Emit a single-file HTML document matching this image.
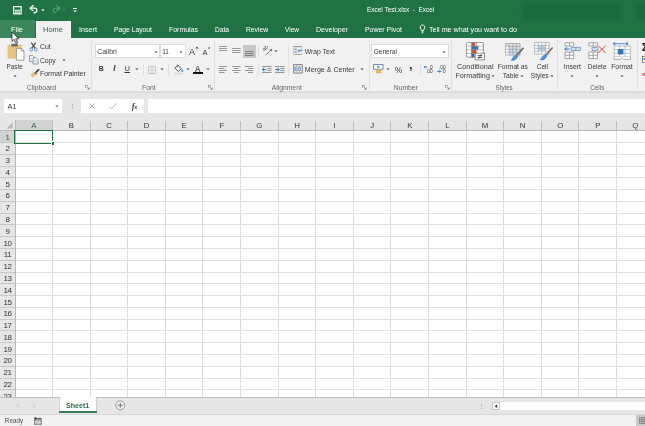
<!DOCTYPE html>
<html><head><meta charset="utf-8"><title>Excel Test.xlsx - Excel</title>
<style>
html,body{margin:0;padding:0}
body{width:645px;height:426px;overflow:hidden;position:relative;background:#fff;font-family:'Liberation Sans', sans-serif;}
#app{position:absolute;left:0;top:0;width:645px;height:426px;overflow:hidden;will-change:transform;opacity:0.999}
#app div,#app span,#app svg{position:absolute;display:block}
#app span{white-space:nowrap;line-height:10px;height:10px}
</style></head><body><div id="app">
<div style="left:0px;top:0px;width:645px;height:37.7px;background:#207245;"></div>
<div style="left:0px;top:20.2px;width:34.8px;height:17.5px;background:#3b865c;"></div>
<div style="left:36px;top:20.6px;width:35.2px;height:17.4px;background:#f1f1f1;"></div>
<div style="left:0px;top:37.7px;width:645px;height:54.3px;background:#f1f1f1;"></div>
<div style="left:0px;top:92px;width:645px;height:38px;background:#e6e6e6;"></div>
<div style="left:0px;top:91.4px;width:645px;height:1.3px;background:#dcdcdc;"></div>
<div style="left:0px;top:130px;width:15px;height:268px;background:#e6e6e6;"></div>
<div style="left:0px;top:398px;width:645px;height:16px;background:#e6e6e6;"></div>
<div style="left:0px;top:414px;width:645px;height:12px;background:#f1f1f1;"></div>
<div style="left:522px;top:3px;width:99px;height:17px;background:rgba(0,40,20,0.11);border-radius:4px;filter:blur(1.5px)"></div>
<div style="left:636px;top:3px;width:12px;height:17px;background:rgba(0,40,20,0.11);border-radius:4px;filter:blur(1.5px)"></div>
<span style="left:367.01px;top:4.80px;font-size:6.46px;color:#fff;">Excel Test.xlsx&nbsp; - &nbsp;Excel</span>
<span style="left:11.00px;top:24.70px;font-size:7.44px;color:#fff;">File</span>
<span style="left:43.01px;top:24.70px;font-size:7.49px;color:#27694a;">Home</span>
<span style="left:78.99px;top:24.70px;font-size:7.2px;color:#fff;">Insert</span>
<span style="left:114.01px;top:24.70px;font-size:6.76px;color:#fff;">Page Layout</span>
<span style="left:168.99px;top:24.70px;font-size:6.96px;color:#fff;">Formulas</span>
<span style="left:215.00px;top:24.70px;font-size:6.63px;color:#fff;">Data</span>
<span style="left:246.00px;top:24.70px;font-size:6.71px;color:#fff;">Review</span>
<span style="left:285.00px;top:24.70px;font-size:6.51px;color:#fff;">View</span>
<span style="left:316.00px;top:24.70px;font-size:7.02px;color:#fff;">Developer</span>
<span style="left:365.01px;top:24.70px;font-size:6.93px;color:#fff;">Power Pivot</span>
<span style="left:429.01px;top:24.70px;font-size:7.13px;color:#fff;">Tell me what you want to do</span>
<div style="left:91.4px;top:40px;width:1px;height:50px;background:#e0e0e0;"></div>
<div style="left:213.6px;top:40px;width:1px;height:50px;background:#e0e0e0;"></div>
<div style="left:368.6px;top:40px;width:1px;height:50px;background:#e0e0e0;"></div>
<div style="left:451px;top:40px;width:1px;height:50px;background:#e0e0e0;"></div>
<div style="left:557.4px;top:40px;width:1px;height:50px;background:#e0e0e0;"></div>
<div style="left:637px;top:40px;width:1px;height:50px;background:#e0e0e0;"></div>
<div style="left:143.2px;top:63.5px;width:1px;height:12px;background:#e0e0e0;"></div>
<div style="left:168px;top:63.5px;width:1px;height:12px;background:#e0e0e0;"></div>
<div style="left:258px;top:45.5px;width:1px;height:12px;background:#e0e0e0;"></div>
<div style="left:258px;top:63.5px;width:1px;height:12px;background:#e0e0e0;"></div>
<div style="left:288.3px;top:45.5px;width:1px;height:30px;background:#e0e0e0;"></div>
<div style="left:420px;top:63.5px;width:1px;height:12px;background:#e0e0e0;"></div>
<span style="left:26.81px;top:83.10px;font-size:6.84px;color:#666;">Clipboard</span>
<span style="left:142.00px;top:83.10px;font-size:6.84px;color:#666;">Font</span>
<span style="left:271.70px;top:83.10px;font-size:6.77px;color:#666;">Alignment</span>
<span style="left:393.79px;top:83.10px;font-size:6.75px;color:#666;">Number</span>
<span style="left:495.62px;top:83.10px;font-size:6.3px;color:#666;">Styles</span>
<span style="left:590.30px;top:83.10px;font-size:6.3px;color:#666;">Cells</span>
<span style="left:6.59px;top:62.30px;font-size:6.3px;color:#3a3a3a;">Paste</span>
<span style="left:39.90px;top:42.20px;font-size:7.0px;color:#3a3a3a;">Cut</span>
<span style="left:39.90px;top:56.00px;font-size:6.81px;color:#3a3a3a;">Copy</span>
<span style="left:39.90px;top:69.40px;font-size:6.94px;color:#3a3a3a;">Format Painter</span>
<div style="left:95.2px;top:44px;width:65px;height:14px;background:#fff;box-sizing:border-box;border:1px solid #dcdcdc"></div>
<div style="left:160.4px;top:44px;width:25.4px;height:14px;background:#fff;box-sizing:border-box;border:1px solid #dcdcdc"></div>
<span style="left:97.30px;top:47.10px;font-size:6.88px;color:#3a3a3a;">Calibri</span>
<span style="left:162.28px;top:47.10px;font-size:6.3px;color:#3a3a3a;">11</span>
<span style="left:98.70px;top:64.30px;font-size:6.91px;color:#3a3a3a;font-weight:bold;">B</span>
<span style="left:113.36px;top:64.30px;font-size:8.2px;color:#3a3a3a;font-weight:bold;font-style:italic;">I</span>
<span style="left:124.50px;top:64.30px;font-size:7.6px;color:#3a3a3a;text-decoration:underline">U</span>
<div style="left:243px;top:44.5px;width:12.5px;height:13.5px;background:#c8c8c8;"></div>
<span style="left:304.81px;top:47.30px;font-size:6.76px;color:#3a3a3a;">Wrap Text</span>
<span style="left:304.82px;top:65.20px;font-size:7.05px;color:#3a3a3a;">Merge &amp; Center</span>
<div style="left:371px;top:44px;width:77.8px;height:14px;background:#fff;box-sizing:border-box;border:1px solid #dcdcdc"></div>
<span style="left:373.70px;top:47.10px;font-size:6.52px;color:#3a3a3a;">General</span>
<span style="left:394.71px;top:65.20px;font-size:8.5px;color:#3a3a3a;">%</span>
<span style="left:408.89px;top:60.00px;font-size:13px;color:#3a3a3a;font-weight:bold;">,</span>
<span style="left:457.01px;top:62.20px;font-size:7.31px;color:#3a3a3a;">Conditional</span>
<span style="left:455.40px;top:71.40px;font-size:7.22px;color:#3a3a3a;">Formatting</span>
<span style="left:497.79px;top:62.20px;font-size:6.69px;color:#3a3a3a;">Format as</span>
<span style="left:502.80px;top:71.40px;font-size:6.65px;color:#3a3a3a;">Table</span>
<span style="left:536.80px;top:62.20px;font-size:6.5px;color:#3a3a3a;">Cell</span>
<span style="left:530.80px;top:71.40px;font-size:6.5px;color:#3a3a3a;">Styles</span>
<span style="left:563.79px;top:62.20px;font-size:6.84px;color:#3a3a3a;">Insert</span>
<span style="left:587.80px;top:62.20px;font-size:6.47px;color:#3a3a3a;">Delete</span>
<span style="left:611.20px;top:62.20px;font-size:6.82px;color:#3a3a3a;">Format</span>
<div style="left:3.5px;top:99px;width:58.5px;height:14px;background:#fff;"></div>
<div style="left:80.5px;top:99px;width:63.5px;height:14px;background:#fff;"></div>
<div style="left:147.5px;top:99px;width:500px;height:14px;background:#fff;"></div>
<span style="left:7.50px;top:102.00px;font-size:7.36px;color:#3a3a3a;">A1</span>
<div style="left:14.5px;top:120px;width:38.2px;height:10.4px;background:#d2d2d2;"></div>
<div style="left:0px;top:130.4px;width:15px;height:12.1px;background:#d2d2d2;"></div>
<span style="left:31.20px;top:121.00px;font-size:7.8px;color:#365c4a;">A</span>
<div style="left:52px;top:130px;width:1px;height:268px;background:#dcdcdc;"></div>
<div style="left:52px;top:121px;width:1px;height:9.5px;background:#bebebe;"></div>
<span style="left:68.80px;top:121.00px;font-size:7.8px;color:#333;">B</span>
<div style="left:90px;top:130px;width:1px;height:268px;background:#dcdcdc;"></div>
<div style="left:90px;top:121px;width:1px;height:9.5px;background:#bebebe;"></div>
<span style="left:106.18px;top:121.00px;font-size:7.8px;color:#333;">C</span>
<div style="left:127px;top:130px;width:1px;height:268px;background:#dcdcdc;"></div>
<div style="left:127px;top:121px;width:1px;height:9.5px;background:#bebebe;"></div>
<span style="left:143.78px;top:121.00px;font-size:7.8px;color:#333;">D</span>
<div style="left:165px;top:130px;width:1px;height:268px;background:#dcdcdc;"></div>
<div style="left:165px;top:121px;width:1px;height:9.5px;background:#bebebe;"></div>
<span style="left:181.60px;top:121.00px;font-size:7.8px;color:#333;">E</span>
<div style="left:202px;top:130px;width:1px;height:268px;background:#dcdcdc;"></div>
<div style="left:202px;top:121px;width:1px;height:9.5px;background:#bebebe;"></div>
<span style="left:219.42px;top:121.00px;font-size:7.8px;color:#333;">F</span>
<div style="left:240px;top:130px;width:1px;height:268px;background:#dcdcdc;"></div>
<div style="left:240px;top:121px;width:1px;height:9.5px;background:#bebebe;"></div>
<span style="left:256.37px;top:121.00px;font-size:7.8px;color:#333;">G</span>
<div style="left:278px;top:130px;width:1px;height:268px;background:#dcdcdc;"></div>
<div style="left:278px;top:121px;width:1px;height:9.5px;background:#bebebe;"></div>
<span style="left:294.18px;top:121.00px;font-size:7.8px;color:#333;">H</span>
<div style="left:315px;top:130px;width:1px;height:268px;background:#dcdcdc;"></div>
<div style="left:315px;top:121px;width:1px;height:9.5px;background:#bebebe;"></div>
<span style="left:333.52px;top:121.00px;font-size:7.8px;color:#333;">I</span>
<div style="left:353px;top:130px;width:1px;height:268px;background:#dcdcdc;"></div>
<div style="left:353px;top:121px;width:1px;height:9.5px;background:#bebebe;"></div>
<span style="left:370.25px;top:121.00px;font-size:7.8px;color:#333;">J</span>
<div style="left:390px;top:130px;width:1px;height:268px;background:#dcdcdc;"></div>
<div style="left:390px;top:121px;width:1px;height:9.5px;background:#bebebe;"></div>
<span style="left:407.20px;top:121.00px;font-size:7.8px;color:#333;">K</span>
<div style="left:428px;top:130px;width:1px;height:268px;background:#dcdcdc;"></div>
<div style="left:428px;top:121px;width:1px;height:9.5px;background:#bebebe;"></div>
<span style="left:445.23px;top:121.00px;font-size:7.8px;color:#333;">L</span>
<div style="left:466px;top:130px;width:1px;height:268px;background:#dcdcdc;"></div>
<div style="left:466px;top:121px;width:1px;height:9.5px;background:#bebebe;"></div>
<span style="left:481.75px;top:121.00px;font-size:7.8px;color:#333;">M</span>
<div style="left:503px;top:130px;width:1px;height:268px;background:#dcdcdc;"></div>
<div style="left:503px;top:121px;width:1px;height:9.5px;background:#bebebe;"></div>
<span style="left:519.78px;top:121.00px;font-size:7.8px;color:#333;">N</span>
<div style="left:541px;top:130px;width:1px;height:268px;background:#dcdcdc;"></div>
<div style="left:541px;top:121px;width:1px;height:9.5px;background:#bebebe;"></div>
<span style="left:557.17px;top:121.00px;font-size:7.8px;color:#333;">O</span>
<div style="left:578px;top:130px;width:1px;height:268px;background:#dcdcdc;"></div>
<div style="left:578px;top:121px;width:1px;height:9.5px;background:#bebebe;"></div>
<span style="left:595.20px;top:121.00px;font-size:7.8px;color:#333;">P</span>
<div style="left:616px;top:130px;width:1px;height:268px;background:#dcdcdc;"></div>
<div style="left:616px;top:121px;width:1px;height:9.5px;background:#bebebe;"></div>
<span style="left:632.37px;top:121.00px;font-size:7.8px;color:#333;">Q</span>
<div style="left:654px;top:130px;width:1px;height:268px;background:#dcdcdc;"></div>
<div style="left:654px;top:121px;width:1px;height:9.5px;background:#bebebe;"></div>
<span style="left:5.47px;top:132.59px;font-size:8px;color:#365c4a;">1</span>
<div style="left:15px;top:142px;width:631px;height:1px;background:#dfdfdf;"></div>
<div style="left:0px;top:142px;width:15px;height:1px;background:#c8c8c8;"></div>
<span style="left:5.47px;top:144.37px;font-size:8px;color:#333;">2</span>
<div style="left:15px;top:154px;width:631px;height:1px;background:#dfdfdf;"></div>
<div style="left:0px;top:154px;width:15px;height:1px;background:#c8c8c8;"></div>
<span style="left:5.47px;top:156.15px;font-size:8px;color:#333;">3</span>
<div style="left:15px;top:166px;width:631px;height:1px;background:#dfdfdf;"></div>
<div style="left:0px;top:166px;width:15px;height:1px;background:#c8c8c8;"></div>
<span style="left:5.47px;top:167.93px;font-size:8px;color:#333;">4</span>
<div style="left:15px;top:177px;width:631px;height:1px;background:#dfdfdf;"></div>
<div style="left:0px;top:177px;width:15px;height:1px;background:#c8c8c8;"></div>
<span style="left:5.47px;top:179.71px;font-size:8px;color:#333;">5</span>
<div style="left:15px;top:189px;width:631px;height:1px;background:#dfdfdf;"></div>
<div style="left:0px;top:189px;width:15px;height:1px;background:#c8c8c8;"></div>
<span style="left:5.47px;top:191.49px;font-size:8px;color:#333;">6</span>
<div style="left:15px;top:201px;width:631px;height:1px;background:#dfdfdf;"></div>
<div style="left:0px;top:201px;width:15px;height:1px;background:#c8c8c8;"></div>
<span style="left:5.47px;top:203.27px;font-size:8px;color:#333;">7</span>
<div style="left:15px;top:213px;width:631px;height:1px;background:#dfdfdf;"></div>
<div style="left:0px;top:213px;width:15px;height:1px;background:#c8c8c8;"></div>
<span style="left:5.47px;top:215.05px;font-size:8px;color:#333;">8</span>
<div style="left:15px;top:224px;width:631px;height:1px;background:#dfdfdf;"></div>
<div style="left:0px;top:224px;width:15px;height:1px;background:#c8c8c8;"></div>
<span style="left:5.47px;top:226.83px;font-size:8px;color:#333;">9</span>
<div style="left:15px;top:236px;width:631px;height:1px;background:#dfdfdf;"></div>
<div style="left:0px;top:236px;width:15px;height:1px;background:#c8c8c8;"></div>
<span style="left:3.50px;top:238.61px;font-size:8px;color:#333;letter-spacing:-0.5px;">10</span>
<div style="left:15px;top:248px;width:631px;height:1px;background:#dfdfdf;"></div>
<div style="left:0px;top:248px;width:15px;height:1px;background:#c8c8c8;"></div>
<span style="left:3.79px;top:250.39px;font-size:8px;color:#333;letter-spacing:-0.5px;">11</span>
<div style="left:15px;top:260px;width:631px;height:1px;background:#dfdfdf;"></div>
<div style="left:0px;top:260px;width:15px;height:1px;background:#c8c8c8;"></div>
<span style="left:3.50px;top:262.17px;font-size:8px;color:#333;letter-spacing:-0.5px;">12</span>
<div style="left:15px;top:272px;width:631px;height:1px;background:#dfdfdf;"></div>
<div style="left:0px;top:272px;width:15px;height:1px;background:#c8c8c8;"></div>
<span style="left:3.50px;top:273.95px;font-size:8px;color:#333;letter-spacing:-0.5px;">13</span>
<div style="left:15px;top:283px;width:631px;height:1px;background:#dfdfdf;"></div>
<div style="left:0px;top:283px;width:15px;height:1px;background:#c8c8c8;"></div>
<span style="left:3.50px;top:285.73px;font-size:8px;color:#333;letter-spacing:-0.5px;">14</span>
<div style="left:15px;top:295px;width:631px;height:1px;background:#dfdfdf;"></div>
<div style="left:0px;top:295px;width:15px;height:1px;background:#c8c8c8;"></div>
<span style="left:3.50px;top:297.51px;font-size:8px;color:#333;letter-spacing:-0.5px;">15</span>
<div style="left:15px;top:307px;width:631px;height:1px;background:#dfdfdf;"></div>
<div style="left:0px;top:307px;width:15px;height:1px;background:#c8c8c8;"></div>
<span style="left:3.50px;top:309.29px;font-size:8px;color:#333;letter-spacing:-0.5px;">16</span>
<div style="left:15px;top:319px;width:631px;height:1px;background:#dfdfdf;"></div>
<div style="left:0px;top:319px;width:15px;height:1px;background:#c8c8c8;"></div>
<span style="left:3.50px;top:321.07px;font-size:8px;color:#333;letter-spacing:-0.5px;">17</span>
<div style="left:15px;top:330px;width:631px;height:1px;background:#dfdfdf;"></div>
<div style="left:0px;top:330px;width:15px;height:1px;background:#c8c8c8;"></div>
<span style="left:3.50px;top:332.85px;font-size:8px;color:#333;letter-spacing:-0.5px;">18</span>
<div style="left:15px;top:342px;width:631px;height:1px;background:#dfdfdf;"></div>
<div style="left:0px;top:342px;width:15px;height:1px;background:#c8c8c8;"></div>
<span style="left:3.50px;top:344.63px;font-size:8px;color:#333;letter-spacing:-0.5px;">19</span>
<div style="left:15px;top:354px;width:631px;height:1px;background:#dfdfdf;"></div>
<div style="left:0px;top:354px;width:15px;height:1px;background:#c8c8c8;"></div>
<span style="left:3.50px;top:356.41px;font-size:8px;color:#333;letter-spacing:-0.5px;">20</span>
<div style="left:15px;top:366px;width:631px;height:1px;background:#dfdfdf;"></div>
<div style="left:0px;top:366px;width:15px;height:1px;background:#c8c8c8;"></div>
<span style="left:3.50px;top:368.19px;font-size:8px;color:#333;letter-spacing:-0.5px;">21</span>
<div style="left:15px;top:378px;width:631px;height:1px;background:#dfdfdf;"></div>
<div style="left:0px;top:378px;width:15px;height:1px;background:#c8c8c8;"></div>
<span style="left:3.50px;top:379.97px;font-size:8px;color:#333;letter-spacing:-0.5px;">22</span>
<div style="left:15px;top:389px;width:631px;height:1px;background:#dfdfdf;"></div>
<div style="left:0px;top:389px;width:15px;height:1px;background:#c8c8c8;"></div>
<span style="left:3.50px;top:391.75px;font-size:8px;color:#333;letter-spacing:-0.5px;">23</span>
<div style="left:15px;top:401px;width:631px;height:1px;background:#dfdfdf;"></div>
<div style="left:0px;top:401px;width:15px;height:1px;background:#c8c8c8;"></div>
<div style="left:0px;top:130px;width:645px;height:1px;background:#b9b9b9;"></div>
<div style="left:14.5px;top:120px;width:1px;height:278px;background:#b9b9b9;"></div>
<div style="left:14.3px;top:129.9px;width:39.0px;height:13.7px;background:transparent;box-sizing:border-box;border:1.2px solid #207245"></div>
<div style="left:51.8px;top:142px;width:2.6px;height:2.6px;background:#207245;outline:0.5px solid #fff"></div>
<div style="left:0px;top:397.7px;width:645px;height:16.5px;background:#e6e6e6;"></div>
<div style="left:0px;top:397.3px;width:645px;height:0.9px;background:#bdbdbd;"></div>
<div style="left:0px;top:414.5px;width:645px;height:12px;background:#f1f1f1;"></div>
<div style="left:0px;top:413.6px;width:645px;height:1px;background:#d6d6d6;"></div>
<div style="left:58.6px;top:397px;width:38.2px;height:14.5px;background:#fff;box-sizing:border-box;border-left:0.8px solid #cfcfcf;border-right:0.8px solid #cfcfcf"></div>
<div style="left:58.6px;top:410.8px;width:38.2px;height:1.8px;background:#3b7a59;"></div>
<span style="left:66.01px;top:400.50px;font-size:7.07px;color:#2c6b4a;font-weight:bold;">Sheet1</span>
<span style="left:4.84px;top:415.60px;font-size:6.3px;color:#4a4a4a;">Ready</span>
<svg style="left:12.6px;top:5.6px" width="9" height="9" viewBox="0 0 9 9"><path d="M0.6 0.6 H8.2 V7.9 H0.6 Z M0.6 4.3 H8.2 M2.6 7.9 V6 H6.2 V7.9" fill="none" stroke="#fff" stroke-width="1.1"/></svg>
<svg style="left:29px;top:5px" width="10" height="9" viewBox="0 0 10 9"><path d="M1 3.2 L4.2 0.6 M1 3.2 L4.2 5.8 M1 3.2 H5.8 C8.6 3.2 8.8 7.2 5.2 8" fill="none" stroke="#fff" stroke-width="1.3" stroke-linecap="round"/></svg>
<svg style="left:40.4px;top:6.7px" width="6" height="6" viewBox="0 0 6 6"><path d="M1.2 2.415 L4.8 2.415 L3 4.17 Z" fill="#fff"/></svg>
<svg style="left:50.5px;top:5px" width="10" height="9" viewBox="0 0 10 9"><path d="M9 3.2 L5.8 0.6 M9 3.2 L5.8 5.8 M9 3.2 H4.2 C1.4 3.2 1.2 7.2 4.8 8" fill="none" stroke="#5c9b7a" stroke-width="1.1" stroke-linecap="round"/></svg>
<svg style="left:60.8px;top:6.7px" width="6" height="6" viewBox="0 0 6 6"><path d="M1.4 2.48 L4.6 2.48 L3 4.04 Z" fill="#5c9b7a"/></svg>
<div style="left:73.2px;top:7.6px;width:3.6px;height:0.9px;background:#fff;"></div>
<svg style="left:72px;top:7.6px" width="6" height="6" viewBox="0 0 6 6"><path d="M1.2 2.415 L4.8 2.415 L3 4.17 Z" fill="#fff"/></svg>
<svg style="left:418.8px;top:23.9px" width="7" height="10" viewBox="0 0 7 10"><path d="M3.5 1 C1.6 1 0.9 2.6 1.3 3.9 C1.7 5 2.4 5.3 2.4 6.6 H4.6 C4.6 5.3 5.3 5 5.7 3.9 C6.1 2.6 5.4 1 3.5 1 Z M2.5 7.8 H4.5 M2.8 8.9 H4.2" fill="none" stroke="#fff" stroke-width="0.9"/></svg>
<svg style="left:7px;top:43px" width="18" height="18" viewBox="0 0 18 18"><rect x="0.6" y="1.8" width="14" height="13.8" fill="#e9c27c"/><rect x="4.4" y="0.8" width="6.4" height="2.6" fill="#666"/><path d="M9.4 5.4 H14.4 L17 8 V17.2 H9.4 Z" fill="#fff" stroke="#8a8a8a" stroke-width="0.8"/><path d="M14.4 5.4 V8 H17" fill="none" stroke="#8a8a8a" stroke-width="0.7"/></svg>
<svg style="left:11.5px;top:73px" width="6" height="6" viewBox="0 0 6 6"><path d="M1.4 2.48 L4.6 2.48 L3 4.04 Z" fill="#3a3a3a"/></svg>
<svg style="left:29px;top:41.5px" width="9" height="10" viewBox="0 0 9 10"><path d="M2.3 0.6 L6.3 6.4 M6.7 0.6 L2.7 6.4" stroke="#4a4a4a" stroke-width="1.2" fill="none"/><ellipse cx="2.2" cy="7.5" rx="1.4" ry="1.7" fill="none" stroke="#5a90cc" stroke-width="0.9"/><ellipse cx="6.8" cy="7.5" rx="1.4" ry="1.7" fill="none" stroke="#5a90cc" stroke-width="0.9"/></svg>
<svg style="left:28.5px;top:55px" width="10" height="10" viewBox="0 0 10 10"><path d="M0.6 0.6 H3.6 L5.2 2.2 V6.6 H0.6 Z" fill="#fff" stroke="#808080" stroke-width="0.8"/><path d="M4 2.8 H7.2 L9 4.6 V9 H4 Z" fill="#fff" stroke="#808080" stroke-width="0.8"/><path d="M5 5.6 H8 M5 7.2 H8 M1.6 3.2 H3.2 M1.6 4.8 H3.2" stroke="#7fb2e0" stroke-width="0.6"/></svg>
<svg style="left:60.7px;top:57.3px" width="6" height="6" viewBox="0 0 6 6"><path d="M1.4 2.48 L4.6 2.48 L3 4.04 Z" fill="#3a3a3a"/></svg>
<svg style="left:29.5px;top:69px" width="10" height="10" viewBox="0 0 10 10"><path d="M8.6 0.6 L5.2 4.2" stroke="#444" stroke-width="1.8" stroke-linecap="round"/><path d="M5.6 3 L6.8 4.4 L4.6 7.6 L2 8.4 L0.8 6.6 L1.6 4.2 Z" fill="#eac27a"/><path d="M4.6 3.4 L6.6 5.4" stroke="#555" stroke-width="1.2"/></svg>
<svg style="left:85.2px;top:85.2px" width="5" height="5" viewBox="0 0 5 5"><path d="M0.4 3 V0.4 H3" fill="none" stroke="#777" stroke-width="0.7"/><path d="M1.6 1.6 L4 4 M4.2 2.2 V4.2 H2.2" fill="none" stroke="#777" stroke-width="0.7"/></svg>
<svg style="left:207.5px;top:85.2px" width="5" height="5" viewBox="0 0 5 5"><path d="M0.4 3 V0.4 H3" fill="none" stroke="#777" stroke-width="0.7"/><path d="M1.6 1.6 L4 4 M4.2 2.2 V4.2 H2.2" fill="none" stroke="#777" stroke-width="0.7"/></svg>
<svg style="left:362px;top:85.2px" width="5" height="5" viewBox="0 0 5 5"><path d="M0.4 3 V0.4 H3" fill="none" stroke="#777" stroke-width="0.7"/><path d="M1.6 1.6 L4 4 M4.2 2.2 V4.2 H2.2" fill="none" stroke="#777" stroke-width="0.7"/></svg>
<svg style="left:444.5px;top:85.2px" width="5" height="5" viewBox="0 0 5 5"><path d="M0.4 3 V0.4 H3" fill="none" stroke="#777" stroke-width="0.7"/><path d="M1.6 1.6 L4 4 M4.2 2.2 V4.2 H2.2" fill="none" stroke="#777" stroke-width="0.7"/></svg>
<svg style="left:10.5px;top:30.5px" width="10" height="14" viewBox="0 0 10 14"><path d="M1 0.8 L1 10.4 L3.2 8.4 L4.9 12.2 L6.5 11.5 L4.8 7.8 L7.8 7.8 Z" fill="#fff" stroke="#222" stroke-width="0.8" stroke-linejoin="round"/></svg>
<svg style="left:152.8px;top:48.8px" width="6" height="6" viewBox="0 0 6 6"><path d="M1.4 2.48 L4.6 2.48 L3 4.04 Z" fill="#3a3a3a"/></svg>
<svg style="left:178.3px;top:48.8px" width="6" height="6" viewBox="0 0 6 6"><path d="M1.4 2.48 L4.6 2.48 L3 4.04 Z" fill="#3a3a3a"/></svg>
<svg style="left:134.2px;top:66.2px" width="6" height="6" viewBox="0 0 6 6"><path d="M1.4 2.48 L4.6 2.48 L3 4.04 Z" fill="#3a3a3a"/></svg>
<span style="left:189.00px;top:47.00px;font-size:9px;color:#3a3a3a;">A</span>
<svg style="left:195px;top:46px" width="4" height="3" viewBox="0 0 4 3"><path d="M0.3 2.4 L2 0.4 L3.7 2.4 Z" fill="#555"/></svg>
<span style="left:202.60px;top:47.70px;font-size:7.5px;color:#3a3a3a;">A</span>
<svg style="left:206.6px;top:46.6px" width="4" height="3" viewBox="0 0 4 3"><path d="M0.5 0.5 L2 2.2 L3.5 0.5 Z" fill="#555"/></svg>
<svg style="left:148.3px;top:65.5px" width="8" height="8" viewBox="0 0 8 8"><path d="M0.5 0.5 H7.5 V7.5 H0.5 Z M4 0.5 V7.5 M0.5 4 H7.5" fill="none" stroke="#c4c4c4" stroke-width="0.9"/></svg>
<svg style="left:159.4px;top:66.2px" width="6" height="6" viewBox="0 0 6 6"><path d="M1.4 2.48 L4.6 2.48 L3 4.04 Z" fill="#3a3a3a"/></svg>
<svg style="left:173.5px;top:64px" width="10" height="11" viewBox="0 0 10 11"><path d="M3.6 1.2 L7.4 4.6 L4.2 7.4 L1 4.2 Z" fill="#fff" stroke="#555" stroke-width="1" stroke-linejoin="round"/><path d="M3.8 0.4 V3.4" stroke="#666" stroke-width="0.7"/><path d="M8.3 5 C8.3 5 9.3 6.4 9.3 7 A1 1 0 0 1 7.3 7 C7.3 6.4 8.3 5 8.3 5 Z" fill="#5b8fcf"/><rect x="0.4" y="8.7" width="8.6" height="1.7" fill="#d9d9d9"/></svg>
<svg style="left:184.7px;top:66.2px" width="6" height="6" viewBox="0 0 6 6"><path d="M1.4 2.48 L4.6 2.48 L3 4.04 Z" fill="#3a3a3a"/></svg>
<span style="left:194.83px;top:64.60px;font-size:8.2px;color:#666;font-weight:bold;">A</span>
<div style="left:193px;top:72.2px;width:10px;height:2px;background:#111;"></div>
<svg style="left:204.7px;top:66.2px" width="6" height="6" viewBox="0 0 6 6"><path d="M1.4 2.48 L4.6 2.48 L3 4.04 Z" fill="#3a3a3a"/></svg>
<svg style="left:218.8px;top:46px" width="8.6" height="6" viewBox="0 0 8.6 6"><rect x="0" y="0" width="8.6" height="0.9" fill="#8f8f8f"/><rect x="0" y="2" width="8.6" height="0.9" fill="#8f8f8f"/><rect x="0" y="4" width="8.6" height="0.9" fill="#8f8f8f"/></svg>
<svg style="left:232px;top:48px" width="8.6" height="6" viewBox="0 0 8.6 6"><rect x="0" y="0" width="8.6" height="0.9" fill="#8f8f8f"/><rect x="0" y="2" width="8.6" height="0.9" fill="#8f8f8f"/><rect x="0" y="4" width="8.6" height="0.9" fill="#8f8f8f"/></svg>
<svg style="left:245px;top:51.2px" width="8.6" height="6" viewBox="0 0 8.6 6"><rect x="0" y="0" width="8.6" height="0.9" fill="#777"/><rect x="0" y="2" width="8.6" height="0.9" fill="#777"/><rect x="0" y="4" width="8.6" height="0.9" fill="#777"/></svg>
<svg style="left:218.8px;top:66.3px" width="8.6" height="8" viewBox="0 0 8.6 8"><rect x="0" y="0" width="8.6" height="0.9" fill="#8f8f8f"/><rect x="0" y="2" width="5.6" height="0.9" fill="#8f8f8f"/><rect x="0" y="4" width="8.6" height="0.9" fill="#8f8f8f"/><rect x="0" y="6" width="5.6" height="0.9" fill="#8f8f8f"/></svg>
<svg style="left:232px;top:66.3px" width="8.6" height="8" viewBox="0 0 8.6 8"><rect x="0.0" y="0" width="8.6" height="0.9" fill="#8f8f8f"/><rect x="1.7999999999999998" y="2" width="5" height="0.9" fill="#8f8f8f"/><rect x="0.0" y="4" width="8.6" height="0.9" fill="#8f8f8f"/><rect x="1.7999999999999998" y="6" width="5" height="0.9" fill="#8f8f8f"/></svg>
<svg style="left:244.6px;top:66.3px" width="8.6" height="8" viewBox="0 0 8.6 8"><rect x="0.0" y="0" width="8.6" height="0.9" fill="#8f8f8f"/><rect x="3.0" y="2" width="5.6" height="0.9" fill="#8f8f8f"/><rect x="0.0" y="4" width="8.6" height="0.9" fill="#8f8f8f"/><rect x="3.0" y="6" width="5.6" height="0.9" fill="#8f8f8f"/></svg>
<svg style="left:262.5px;top:45.5px" width="10" height="10" viewBox="0 0 10 10"><text x="0" y="0" font-size="5.6" font-style="italic" fill="#555" transform="translate(1.2,5.6) rotate(-45)" font-family="Liberation Sans, sans-serif">ab</text><path d="M2.6 9 L8.8 3.4 M8.8 3.4 L6.6 3.8 M8.8 3.4 L8.4 5.6" stroke="#666" stroke-width="0.8" fill="none"/></svg>
<svg style="left:272.8px;top:48.3px" width="6" height="6" viewBox="0 0 6 6"><path d="M1.4 2.48 L4.6 2.48 L3 4.04 Z" fill="#3a3a3a"/></svg>
<svg style="left:262.4px;top:66px" width="9.6" height="7.4" viewBox="0 0 9.6 7.4"><rect x="0.0" y="0.0" width="9.6" height="0.9" fill="#888"/><rect x="5.4" y="2.05" width="4.2" height="0.9" fill="#888"/><rect x="5.4" y="4.1" width="4.2" height="0.9" fill="#888"/><rect x="0.0" y="6.1499999999999995" width="9.6" height="0.9" fill="#888"/><path d="M0.4 3.6 H4.4 M0.4 3.6 L2.2 1.8 M0.4 3.6 L2.2 5.4" stroke="#2f6fbf" stroke-width="1" fill="none"/></svg>
<svg style="left:275.2px;top:66px" width="9.6" height="7.4" viewBox="0 0 9.6 7.4"><rect x="0.0" y="0.0" width="9.6" height="0.9" fill="#888"/><rect x="5.4" y="2.05" width="4.2" height="0.9" fill="#888"/><rect x="5.4" y="4.1" width="4.2" height="0.9" fill="#888"/><rect x="0.0" y="6.1499999999999995" width="9.6" height="0.9" fill="#888"/><path d="M0.2 3.6 H4.2 M4.2 3.6 L2.4 1.8 M4.2 3.6 L2.4 5.4" stroke="#2f6fbf" stroke-width="1" fill="none"/></svg>
<svg style="left:293.2px;top:46px" width="9.4" height="9.4" viewBox="0 0 9.4 9.4"><path d="M0.5 0.5 H8.9 M0.5 3.2 H4.2 M0.5 6 H4.2 M0.5 8.8 H8.9" stroke="#8a8a8a" stroke-width="0.9" fill="none"/><path d="M0.5 0.5 V8.8 M3 0.5 V8.8 M6 0.5 V2 M6 7.4 V8.8 M8.9 0.5 V2 M8.9 7.4 V8.8" stroke="#a9a9a9" stroke-width="0.7" fill="none" stroke-dasharray="1.2 0.8"/><path d="M5 4.8 H8.8 V3 M5 4.8 L6.5 3.5 M5 4.8 L6.5 6.1" stroke="#3a78c6" stroke-width="0.9" fill="none"/></svg>
<svg style="left:293.2px;top:64px" width="9.8" height="9.6" viewBox="0 0 9.8 9.6"><path d="M0.5 0.5 H9.3 V9.1 H0.5 Z" fill="none" stroke="#7d7d7d" stroke-width="0.9"/><path d="M3.4 0.5 V3 M6.4 0.5 V3 M3.4 6.6 V9.1 M6.4 6.6 V9.1" stroke="#a0a0a0" stroke-width="0.7"/><rect x="0.9" y="3.1" width="8" height="3.4" fill="#dbe8f6"/><path d="M0.5 3 H9.3 M0.5 6.6 H9.3" stroke="#8a8a8a" stroke-width="0.7"/><path d="M1.8 4.8 H7.8 M1.8 4.8 L3 3.8 M1.8 4.8 L3 5.8 M7.8 4.8 L6.6 3.8 M7.8 4.8 L6.6 5.8" stroke="#3a78c6" stroke-width="0.7" fill="none"/></svg>
<svg style="left:359.1px;top:66.4px" width="6" height="6" viewBox="0 0 6 6"><path d="M1.4 2.48 L4.6 2.48 L3 4.04 Z" fill="#3a3a3a"/></svg>
<svg style="left:441.3px;top:48.6px" width="6" height="6" viewBox="0 0 6 6"><path d="M1.4 2.48 L4.6 2.48 L3 4.04 Z" fill="#3a3a3a"/></svg>
<svg style="left:373px;top:64px" width="11" height="10" viewBox="0 0 11 10"><rect x="0.6" y="0.6" width="9.4" height="4.6" fill="#fff" stroke="#5f80ad" stroke-width="0.9"/><ellipse cx="5.3" cy="2.9" rx="1.2" ry="1.1" fill="#6f8db6"/><ellipse cx="5.6" cy="6.6" rx="2.6" ry="0.9" fill="#f0c060" stroke="#d99a2b" stroke-width="0.5"/><ellipse cx="5.6" cy="8.2" rx="2.6" ry="0.9" fill="#f0c060" stroke="#d99a2b" stroke-width="0.5"/></svg>
<svg style="left:385px;top:66.2px" width="6" height="6" viewBox="0 0 6 6"><path d="M1.4 2.48 L4.6 2.48 L3 4.04 Z" fill="#3a3a3a"/></svg>
<svg style="left:424.4px;top:64.7px" width="9.4" height="8.8" viewBox="0 0 9.4 8.8"><path d="M0.3 2 H3.4 M0.3 2 L1.5 0.8 M0.3 2 L1.5 3.2" stroke="#2f6fbf" stroke-width="0.9" fill="none"/><text x="5.9" y="3.7" font-family="Liberation Sans, sans-serif" font-size="4.7" fill="#333">0</text><text x="2" y="8" font-family="Liberation Sans, sans-serif" font-size="4.7" fill="#333">.00</text></svg>
<svg style="left:437.4px;top:64.7px" width="9.4" height="8.8" viewBox="0 0 9.4 8.8"><path d="M0.2 6.4 H3.6 M3.6 6.4 L2.4 5.2 M3.6 6.4 L2.4 7.6" stroke="#2f6fbf" stroke-width="0.9" fill="none"/><text x="2" y="3.7" font-family="Liberation Sans, sans-serif" font-size="4.7" fill="#333">.00</text><text x="5.9" y="8" font-family="Liberation Sans, sans-serif" font-size="4.7" fill="#333">0</text></svg>
<svg style="left:466px;top:42px" width="20" height="19" viewBox="0 0 20 19"><rect x="0.4" y="0.4" width="17" height="14.8" rx="1.2" fill="#fff"/><rect x="5.3" y="0.4" width="3.9" height="3.7" fill="#c9533a"/><rect x="5.3" y="4.1" width="7" height="3.7" fill="#2f6db8"/><rect x="5.3" y="7.8" width="4.9" height="3.7" fill="#c9533a"/><rect x="5.3" y="11.5" width="3.3" height="3.7" fill="#2f6db8"/><path d="M5.3 0.4 V15.2 M10.5 0.4 V15.2 M0.4 4.1 H17.4 M0.4 7.8 H17.4 M0.4 11.5 H17.4" stroke="#8f8f8f" stroke-width="0.6" fill="none"/><rect x="0.4" y="0.4" width="17" height="14.8" rx="1.2" fill="none" stroke="#7d7d7d" stroke-width="0.8"/><rect x="9.2" y="11.1" width="9.4" height="6.8" fill="#fff" stroke="#777" stroke-width="0.8"/><path d="M11.6 13.6 H16.2 M11.6 15.5 H16.2 M15.6 12.2 L12.4 16.9" stroke="#333" stroke-width="0.8"/></svg>
<svg style="left:504.5px;top:43px" width="20" height="18" viewBox="0 0 20 18"><rect x="0.5" y="0.5" width="14.6" height="11.6" fill="#fff"/><rect x="0.5" y="0.5" width="14.6" height="2.9" fill="#e4e4e4"/><rect x="4.1" y="3.4" width="11" height="8.7" fill="#cfe0f3"/><path d="M0.50 0.5 V12.1 M4.15 0.5 V12.1 M7.80 0.5 V12.1 M11.45 0.5 V12.1 M15.10 0.5 V12.1 M0.5 0.50 H15.1 M0.5 3.40 H15.1 M0.5 6.30 H15.1 M0.5 9.20 H15.1 M0.5 12.10 H15.1 " stroke="#8f8f8f" stroke-width="0.6" fill="none"/><g transform="translate(5.6,4.6)"><path d="M12.4 0.8 L6.2 7.8" stroke="#6a6a6a" stroke-width="1.6" stroke-linecap="round"/><path d="M6.4 7 L7.8 8.4 L5.4 11.8 C3.6 13.4 0.8 13.2 -0.4 12.6 C1 12 1.4 11 2 9.8 C2.8 8.4 4.8 7.2 6.4 7 Z" fill="#4a90dc"/></g></svg>
<svg style="left:534px;top:42.3px" width="20" height="19" viewBox="0 0 20 19"><rect x="0.5" y="0.5" width="14.6" height="11.6" fill="#fff"/><rect x="4.1" y="3.6" width="7.2" height="5.2" fill="#b9d5f0"/><path d="M0.50 0.5 V12.1 M4.15 0.5 V12.1 M7.80 0.5 V12.1 M11.45 0.5 V12.1 M15.10 0.5 V12.1 M0.5 0.50 H15.1 M0.5 3.40 H15.1 M0.5 6.30 H15.1 M0.5 9.20 H15.1 M0.5 12.10 H15.1 " stroke="#9a9a9a" stroke-width="0.6" fill="none"/><g transform="translate(5.8,5.2)"><path d="M12.4 0.8 L6.2 7.8" stroke="#6a6a6a" stroke-width="1.6" stroke-linecap="round"/><path d="M6.4 7 L7.8 8.4 L5.4 11.8 C3.6 13.4 0.8 13.2 -0.4 12.6 C1 12 1.4 11 2 9.8 C2.8 8.4 4.8 7.2 6.4 7 Z" fill="#4a90dc"/></g></svg>
<svg style="left:490.2px;top:73.4px" width="6" height="6" viewBox="0 0 6 6"><path d="M1.4 2.48 L4.6 2.48 L3 4.04 Z" fill="#3a3a3a"/></svg>
<svg style="left:519px;top:73.4px" width="6" height="6" viewBox="0 0 6 6"><path d="M1.4 2.48 L4.6 2.48 L3 4.04 Z" fill="#3a3a3a"/></svg>
<svg style="left:548.6px;top:73.4px" width="6" height="6" viewBox="0 0 6 6"><path d="M1.4 2.48 L4.6 2.48 L3 4.04 Z" fill="#3a3a3a"/></svg>
<svg style="left:564px;top:42px" width="18" height="18" viewBox="0 0 18 18"><rect x="1" y="0.8" width="8.8" height="3.2" fill="#fff"/><path d="M1.00 0.8 V4.0 M5.40 0.8 V4.0 M9.80 0.8 V4.0 M1 0.80 H9.8 M1 4.00 H9.8 " stroke="#808080" stroke-width="0.7" fill="none"/><rect x="7.2" y="5.4" width="9.2" height="3.2" fill="#cfe0f3"/><path d="M7.20 5.4 V8.600000000000001 M11.80 5.4 V8.600000000000001 M16.40 5.4 V8.600000000000001 M7.2 5.40 H16.4 M7.2 8.60 H16.4 " stroke="#5f86b8" stroke-width="0.7" fill="none"/><path d="M0.8 7 H5.4 M0.8 7 L2.6 5.4 M0.8 7 L2.6 8.6" stroke="#2f6fbf" stroke-width="1" fill="none"/><rect x="1" y="10" width="8.8" height="6.6" fill="#fff"/><path d="M1.00 10 V16.6 M5.40 10 V16.6 M9.80 10 V16.6 M1 10.00 H9.8 M1 13.30 H9.8 M1 16.60 H9.8 " stroke="#808080" stroke-width="0.7" fill="none"/></svg>
<svg style="left:588px;top:42px" width="19" height="18" viewBox="0 0 19 18"><rect x="0.8" y="0.8" width="8.6" height="3.2" fill="#fff"/><path d="M0.80 0.8 V4.0 M5.10 0.8 V4.0 M9.40 0.8 V4.0 M0.8 0.80 H9.4 M0.8 4.00 H9.4 " stroke="#808080" stroke-width="0.7" fill="none"/><rect x="4.1" y="5.4" width="5.9" height="3.2" fill="#cfe0f3"/><path d="M4.10 5.4 V8.600000000000001 M10.00 5.4 V8.600000000000001 M4.1 5.40 H10.0 M4.1 8.60 H10.0 " stroke="#5f86b8" stroke-width="0.7" fill="none"/><path d="M10.2 3.6 L17.6 11 M17.6 3.6 L10.2 11" stroke="#d9482b" stroke-width="1" fill="none"/><rect x="0.8" y="10" width="8.6" height="6.6" fill="#fff"/><path d="M0.80 10 V16.6 M5.10 10 V16.6 M9.40 10 V16.6 M0.8 10.00 H9.4 M0.8 13.30 H9.4 M0.8 16.60 H9.4 " stroke="#808080" stroke-width="0.7" fill="none"/></svg>
<svg style="left:613px;top:42px" width="19" height="18.5" viewBox="0 0 19 18.5"><path d="M0.8 0.4 V3 M14.6 0.4 V3 M0.8 1.7 H14.6 M0.8 1.7 L2.4 0.5 M0.8 1.7 L2.4 2.9 M14.6 1.7 L13 0.5 M14.6 1.7 L13 2.9" stroke="#3a78c6" stroke-width="0.8" fill="none"/><rect x="1.2" y="4" width="16.2" height="11" fill="#fff"/><path d="M1.20 4 V15 M6.60 4 V15 M12.00 4 V15 M17.40 4 V15 M1.2 4.00 H17.4 M1.2 7.67 H17.4 M1.2 11.33 H17.4 M1.2 15.00 H17.4 " stroke="#999" stroke-width="0.6" fill="none"/><rect x="4.8" y="7" width="5.6" height="5.4" fill="#2f74c0"/><path d="M1.2 15 V17.4 H7.6 L9.2 15.8 L10.8 17.4 H17.4 V15" fill="#fff" stroke="#8a8a8a" stroke-width="0.7"/></svg>
<svg style="left:569.2px;top:73.4px" width="6" height="6" viewBox="0 0 6 6"><path d="M1.4 2.48 L4.6 2.48 L3 4.04 Z" fill="#3a3a3a"/></svg>
<svg style="left:594px;top:73.4px" width="6" height="6" viewBox="0 0 6 6"><path d="M1.4 2.48 L4.6 2.48 L3 4.04 Z" fill="#3a3a3a"/></svg>
<svg style="left:619.1px;top:73.4px" width="6" height="6" viewBox="0 0 6 6"><path d="M1.4 2.48 L4.6 2.48 L3 4.04 Z" fill="#3a3a3a"/></svg>
<span style="left:641.69px;top:42.20px;font-size:11px;color:#222;font-weight:bold;">Σ</span>
<svg style="left:642px;top:56px" width="6" height="7" viewBox="0 0 6 7"><rect x="0.5" y="0.5" width="6" height="6" fill="#fff" stroke="#666" stroke-width="0.8"/><rect x="1.6" y="2" width="4" height="2" fill="#3a78c6"/></svg>
<svg style="left:642px;top:71px" width="6" height="6" viewBox="0 0 6 6"><path d="M5 0.5 L0.6 3.4 L5 5.6" fill="none" stroke="#e0506a" stroke-width="1.1"/></svg>
<svg style="left:53.6px;top:102.8px" width="6" height="6" viewBox="0 0 6 6"><path d="M1.3 2.4475 L4.7 2.4475 L3 4.105 Z" fill="#555"/></svg>
<div style="left:71.5px;top:103.8px;width:0.9px;height:0.9px;background:#a8a8a8;"></div>
<div style="left:71.5px;top:105.9px;width:0.9px;height:0.9px;background:#a8a8a8;"></div>
<div style="left:71.5px;top:108px;width:0.9px;height:0.9px;background:#a8a8a8;"></div>
<svg style="left:88.7px;top:103.2px" width="6" height="6" viewBox="0 0 6 6"><path d="M0.5 0.5 L5.5 5.5 M5.5 0.5 L0.5 5.5" stroke="#b0b0b0" stroke-width="1" fill="none"/></svg>
<svg style="left:109.3px;top:103.2px" width="8" height="6.4" viewBox="0 0 8 6.4"><path d="M0.5 3.6 L2.6 5.8 L7.3 0.5" stroke="#b0b0b0" stroke-width="1" fill="none"/></svg>
<span style="left:131.68px;top:100.90px;font-size:8.5px;color:#444;font-weight:bold;font-style:italic;font-family:'Liberation Serif',serif;">f</span>
<span style="left:134.35px;top:102.30px;font-size:5.2px;color:#444;font-weight:bold;">x</span>
<svg style="left:5.8px;top:121.6px" width="7" height="7" viewBox="0 0 7 7"><path d="M6.6 0.6 V6.6 H0.6 Z" fill="#b9b9b9"/></svg>
<svg style="left:15.6px;top:403.2px" width="4" height="5" viewBox="0 0 4 5"><path d="M2.8 0.5 L0.9 2.5 L2.8 4.5" stroke="#c0c0c0" stroke-width="1" fill="none"/></svg>
<svg style="left:31.8px;top:403.2px" width="4" height="5" viewBox="0 0 4 5"><path d="M1.2 0.5 L3.1 2.5 L1.2 4.5" stroke="#c0c0c0" stroke-width="1" fill="none"/></svg>
<svg style="left:115.2px;top:400.4px" width="10.6" height="10.6" viewBox="0 0 10.6 10.6"><circle cx="5.3" cy="5.3" r="4.5" fill="#eee" stroke="#8a8a8a" stroke-width="0.8"/><path d="M5.3 2.9 V7.7 M2.9 5.3 H7.7" stroke="#666" stroke-width="0.9"/></svg>
<div style="left:481.4px;top:403.6px;width:0.9px;height:0.9px;background:#a8a8a8;"></div>
<div style="left:481.4px;top:405.7px;width:0.9px;height:0.9px;background:#a8a8a8;"></div>
<div style="left:481.4px;top:407.8px;width:0.9px;height:0.9px;background:#a8a8a8;"></div>
<div style="left:491.5px;top:402.3px;width:154px;height:8px;background:#fff;"></div>
<div style="left:491.5px;top:402.3px;width:8.5px;height:8px;background:#fff;box-sizing:border-box;border:0.8px solid #c4c4c4"></div>
<svg style="left:493.8px;top:404.2px" width="4" height="4.4" viewBox="0 0 4 4.4"><path d="M3.2 0.3 V4.1 L0.6 2.2 Z" fill="#333"/></svg>
<svg style="left:34.2px;top:416.6px" width="8" height="8" viewBox="0 0 8 8"><rect x="0.4" y="3" width="7.2" height="4.4" fill="#b5b5b5" stroke="#707070" stroke-width="0.7"/><path d="M0.4 5.2 H7.6 M3 3 V7.4 M5.4 3 V7.4" stroke="#eee" stroke-width="0.5"/><rect x="3.4" y="0.9" width="4.2" height="1.5" fill="#555"/><circle cx="1.6" cy="1.6" r="1.4" fill="#444"/></svg>
<div style="left:635.5px;top:415px;width:10px;height:11px;background:#c9c9c9;"></div>
<svg style="left:638.6px;top:417.4px" width="7" height="7" viewBox="0 0 7 7"><path d="M0.5 0.5 H7 M0.5 2.5 H7 M0.5 4.5 H7 M0.5 6.5 H7 M0.5 0.5 V6.5 M2.7 0.5 V6.5 M4.9 0.5 V6.5" stroke="#777" stroke-width="0.7" fill="none"/></svg>
</div></body></html>
